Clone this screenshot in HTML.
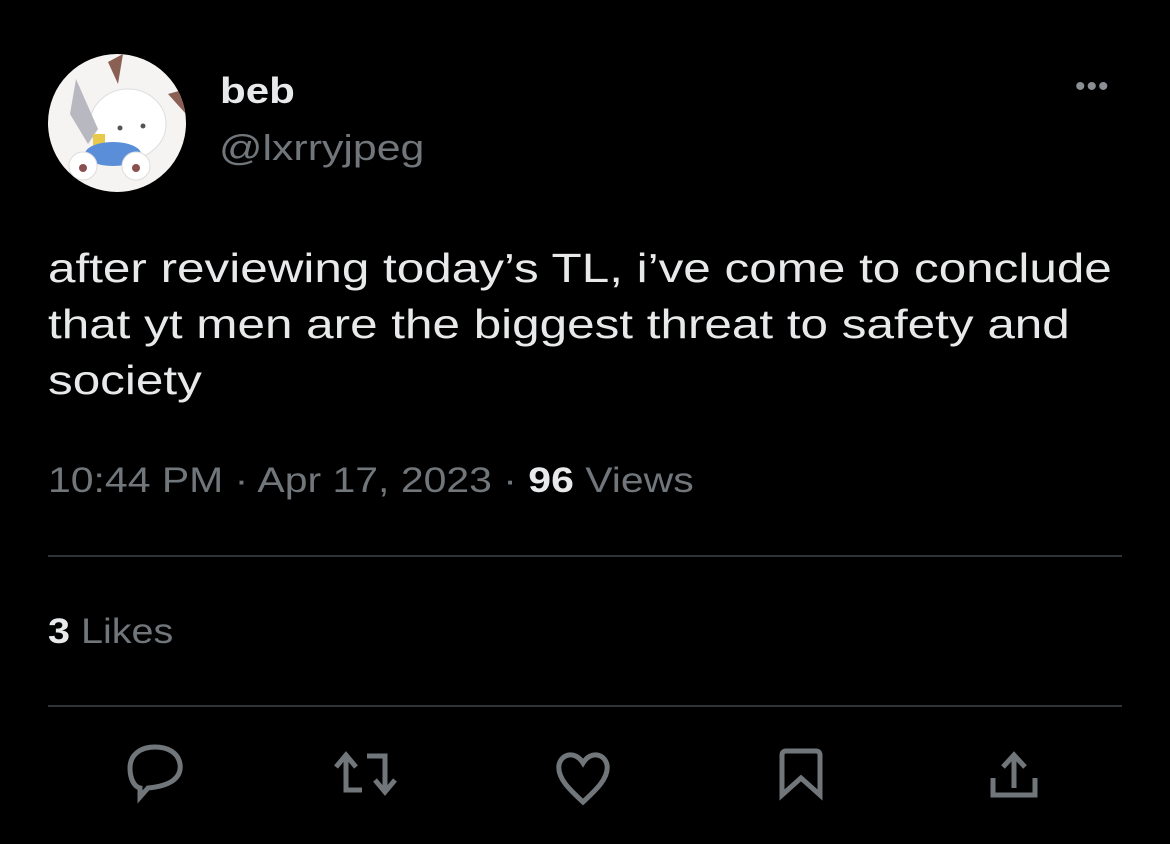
<!DOCTYPE html>
<html><head><meta charset="utf-8"><style>
body{margin:0;background:#000;width:1170px;height:844px;overflow:hidden;font-family:"Liberation Sans",sans-serif;position:relative}
.a{position:absolute;transform-origin:0 0;white-space:nowrap}
.g{color:#71767b}
</style></head><body>
<div class="a" style="left:48px;top:54px;width:138px;height:138px;border-radius:50%;background:#f6f3f3;overflow:hidden">
<svg width="138" height="138" viewBox="0 0 138 138">
<path d="M60 8 L75 0 L70 30 Z" fill="#8a6055"/>
<path d="M120 40 L138 35 L138 60 Z" fill="#8a6055"/>
<ellipse cx="80" cy="70" rx="38" ry="35" fill="#fff" stroke="#ddd"/>
<path d="M28 25 L50 75 L40 90 L22 60 Z" fill="#b8b8c0"/>
<rect x="45" y="80" width="12" height="25" fill="#e8c94a"/>
<ellipse cx="65" cy="100" rx="28" ry="12" fill="#5a8ed8"/>
<circle cx="35" cy="112" r="14" fill="#fff" stroke="#ddd"/>
<circle cx="88" cy="112" r="14" fill="#fff" stroke="#ddd"/>
<circle cx="35" cy="114" r="4" fill="#8a5050"/><circle cx="88" cy="114" r="4" fill="#8a5050"/>
<circle cx="72" cy="74" r="2.5" fill="#555"/><circle cx="95" cy="72" r="2.5" fill="#555"/>
</svg></div>
<div class="a" style="left:220px;top:70px;font-size:36px;font-weight:bold;color:#e7e9ea;transform:scaleX(1.17)">beb</div>
<div class="a g" style="left:219px;top:127px;font-size:36px;transform:scaleX(1.19)">@lxrryjpeg</div>
<div class="a" style="left:1075px;top:70px;font-size:30px;letter-spacing:1px;color:#8b8f93">•••</div>
<div class="a" style="left:48px;top:240px;font-size:40.5px;line-height:56px;color:#e7e9ea;transform:scaleX(1.22)">after reviewing today’s TL, i’ve come to conclude<br>that yt men are the biggest threat to safety and<br>society</div>
<div class="a g" style="left:48px;top:461px;font-size:35px;transform:scaleX(1.17)">10:44 PM · Apr 17, 2023 · <b style="color:#e7e9ea">96</b> Views</div>
<div class="a" style="left:48px;top:555px;width:1074px;height:2px;background:#2f3336"></div>
<div class="a g" style="left:48px;top:612px;font-size:35px;transform:scaleX(1.13)"><b style="color:#e7e9ea">3</b> Likes</div>
<div class="a" style="left:48px;top:705px;width:1074px;height:2px;background:#2f3336"></div>
<svg class="a" style="left:0;top:740px" width="1170" height="80" fill="none" stroke="#71767b" stroke-width="5">
<path d="M140 48 L140 57 L148 48 C170 46 182 38 180 24 C178 12 167 7 155 7 C140 7 130 15 130 28 C130 40 135 47 140 48 Z"/>
<path d="M346 18 V50 H362 M336 27 L346 15 L356 27 M367 16 H385 V50 M375 40 L385 52 L395 40"/>
<path d="M583 62 C570 50 557 38 559 25 C561 14 575 10 583 23 C591 10 605 14 607 25 C609 38 596 50 583 62 Z"/>
<path d="M782 55 V15 C782 12 784 11 786 11 H816 C818 11 820 12 820 15 V55 L801 38 Z"/>
<path d="M1014 48 V16 M1003 27 L1014 15 L1025 27 M993 38 V55 H1035 V38"/>
</svg>
</body></html>
